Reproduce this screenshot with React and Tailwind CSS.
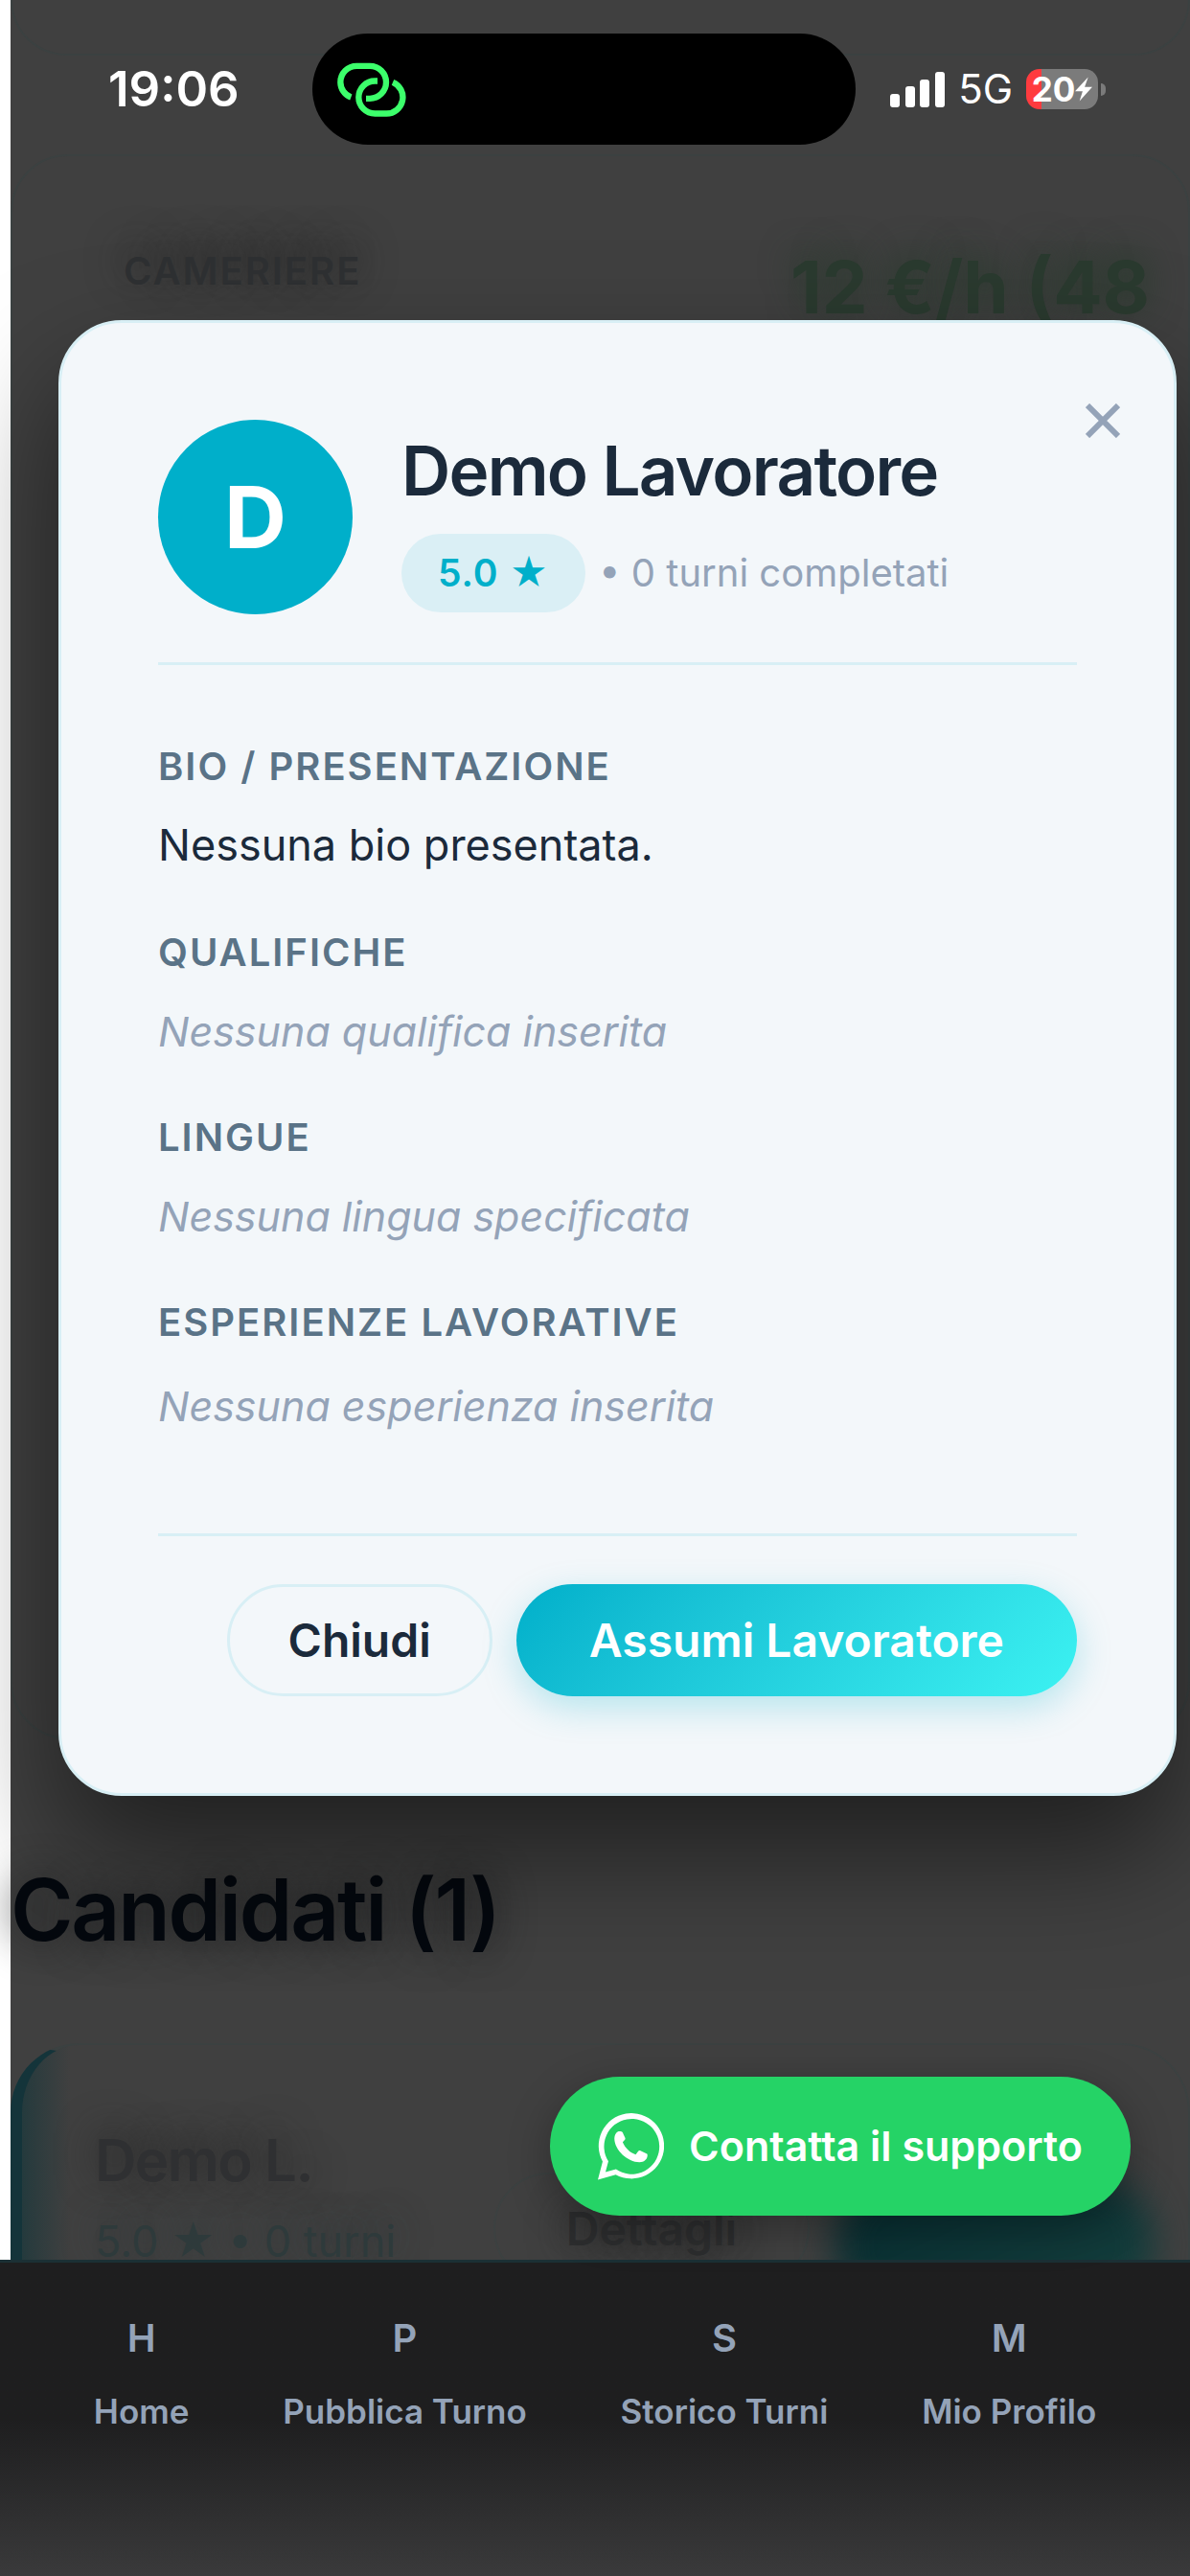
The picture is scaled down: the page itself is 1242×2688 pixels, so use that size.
import React, { useState } from "react";

const SECTIONS = [
  { title: "Bio / Presentazione", text: "Nessuna bio presentata.", filled: true },
  { title: "Qualifiche", text: "Nessuna qualifica inserita" },
  { title: "Lingue", text: "Nessuna lingua specificata" },
  { title: "Esperienze lavorative", text: "Nessuna esperienza inserita", spaced: true },
];

const NAV_ITEMS = [
  { letter: "H", label: "Home" },
  { letter: "P", label: "Pubblica Turno" },
  { letter: "S", label: "Storico Turni" },
  { letter: "M", label: "Mio Profilo" },
];

function LinkIcon() {
  return (
    <svg viewBox="66 44 216 170" className="w-[72px] h-[57px]" fill="none" stroke="#3cff6b" strokeWidth="19">
      <path d="M109 153A51 51 0 0 1 76 106A51 51 0 0 1 127 55H168A51 51 0 0 1 168 157H156" />
      <path d="M192 102H184A51 51 0 0 0 184 204H220A51 51 0 0 0 240 106" />
    </svg>
  );
}

function SignalIcon() {
  return (
    <svg viewBox="0 0 57 37" className="w-[57px] h-[37px]" fill="#fff">
      <rect x="0" y="23" width="10" height="14" rx="3" />
      <rect x="16" y="15" width="10" height="22" rx="3" />
      <rect x="31" y="8" width="10" height="29" rx="3" />
      <rect x="47" y="0" width="10" height="37" rx="3" />
    </svg>
  );
}

function Battery() {
  return (
    <div className="flex items-center gap-[3px]">
      <div className="flex h-[42px] w-[75px] items-center justify-center rounded-[14px] bg-linear-to-r from-[#ff3b3f] from-[16px] to-[#7b7b7b] to-[16px]">
        <span className="text-[35px] leading-[42px] font-bold">20</span>
        <svg viewBox="0 0 50 72" className="w-[18px] h-[26px]" fill="#fff">
          <path d="M38 1L0 42H22L13 71L50 30H28Z" />
        </svg>
      </div>
      <div className="h-[13px] w-[5px] rounded-r-full bg-[#7b7b7b]" />
    </div>
  );
}

function WhatsAppIcon() {
  return (
    <svg viewBox="42 60 208 210" className="w-[69px] h-[70px]" fill="#fff">
      <path
        fillRule="evenodd"
        d="M42 269L57 212A103 103 0 1 1 98 253ZM66 245L99 236A87 87 0 1 0 75 211Z"
      />
      <path d="M94 140C95 125 102 117 110 117C118 116 120 119 122 125L128 138C129 142 127 144 120 151C128 170 143 184 161 190L169 179C171 177 173 177 176 178L195 187C198 188 198 190 198 193C197 206 187 214 173 214C135 213 95 176 94 140Z" />
    </svg>
  );
}

function StatusBar() {
  return (
    <div className="absolute inset-x-0 top-0 flex h-[186px] items-center pr-[88px] pl-[113px] text-white">
      <span className="w-[213px] text-[51px] leading-[60px] font-semibold">19:06</span>
      <div className="flex h-[116px] w-[567px] items-center rounded-full bg-black pl-[26px]">
        <LinkIcon />
      </div>
      <div className="ml-auto flex items-center gap-[14px]">
        <SignalIcon />
        <span className="text-[42px] leading-[50px]">5G</span>
        <Battery />
      </div>
    </div>
  );
}

// Page content dimmed under the modal backdrop
function ShiftPage() {
  return (
    <div className="flex min-h-0 flex-1 overflow-hidden">
      <div className="w-[11px] shrink-0 bg-white" />
      <div className="flex min-w-0 flex-1 flex-col bg-[#404040]">
        <div className="h-[58px] shrink-0 rounded-b-[60px] border-x-2 border-b-2 border-[#3b4141]" />
        <section className="mt-[103px] flex h-[1654px] shrink-0 items-start justify-between rounded-[60px] border-2 border-[#3b4141] pt-[90px] pr-[40px] pl-[116px] whitespace-nowrap">
          <h3 className="mt-[6px] text-[40px] leading-[48px] font-semibold tracking-wider text-[#2e3032] uppercase [text-shadow:0_-10px_40px_#222]">
            Cameriere
          </h3>
          <span className="text-[76px] leading-[92px] font-bold text-[#2a3a2f] [text-shadow:0_-6px_36px_#263a2b]">
            12 €/h (48
          </span>
        </section>
        <h2 className="mt-[123px] text-[89px] leading-[110px] font-semibold tracking-tight text-[#04080e] [text-shadow:0_0_40px_#1c1d1e]">
          Candidati (1)
        </h2>
        <section className="mt-[84px] flex h-[400px] shrink-0 items-start justify-between rounded-[72px] border-2 border-l-[12px] border-[#3b4141] border-l-[#14343a] bg-linear-to-r from-[#243a3d] to-[#404040] to-[50px] pt-[84px] pr-[35px] pl-[76px]">
          <div className="flex flex-col gap-[29px]">
            <h3 className="text-[60px] leading-[72px] font-semibold tracking-tight text-[#2f3032] [text-shadow:0_-6px_40px_#242424]">
              Demo L.
            </h3>
            <p className="text-[45px] leading-[40px] text-[#2e3a3b] [text-shadow:0_-6px_36px_#303b3d]">5.0 ★ • 0 turni</p>
          </div>
          <div className="mt-[49px] flex gap-[26px]">
            <button className="h-[117px] w-[330px] rounded-full border-2 border-[#3c4141] text-[48px] font-semibold text-[#2c2d2e] [text-shadow:0_0_40px_#222]">
              Dettagli
            </button>
            <div className="h-[150px] w-[334px] rounded-full bg-linear-to-br from-[#05292e] to-[#17423f] blur-[18px]" />
          </div>
        </section>
      </div>
    </div>
  );
}

function BottomNav() {
  return (
    <nav className="flex h-[330px] shrink-0 items-start justify-evenly border-t-[3px] border-[#1b3035] bg-linear-to-b from-[#1e1e1f] from-50% to-[#3a3a3b] pt-[55px] font-semibold text-[#94a3b8]">
      {NAV_ITEMS.map((item) => (
        <a key={item.label} href="#" className="flex flex-col items-center gap-[30px]">
          <span className="text-[40px] leading-[48px]">{item.letter}</span>
          <span className="text-[35px] leading-[44px]">{item.label}</span>
        </a>
      ))}
    </nav>
  );
}

function WorkerModal({ onClose }) {
  return (
    <div className="absolute inset-x-0 top-0 pt-[334px] pr-[14px] pl-[61px]">
      <div
        role="dialog"
        aria-label="Demo Lavoratore"
        className="relative rounded-[66px] border-[3px] border-[#d8eff5] bg-[#f3f7fa] px-[101px] py-[101px] text-[#1b2a3b] shadow-[0_60px_120px_rgba(0,0,0,0.5)]"
      >
        <button aria-label="Chiudi finestra" onClick={onClose} className="absolute top-[84px] right-[56px]">
          <svg viewBox="0 0 36 36" className="size-[36px]" stroke="#94a3b8" strokeWidth="6">
            <path d="M2 2L34 34M34 2L2 34" />
          </svg>
        </button>

        <header className="flex items-center gap-[51px] border-b-[3px] border-[#d8eff5] pb-[50px]">
          <div className="flex size-[203px] shrink-0 items-center justify-center rounded-full bg-[#00afca] text-[90px] font-bold text-white">
            D
          </div>
          <div>
            <h2 className="text-[71px] leading-[102px] font-semibold tracking-tight">Demo Lavoratore</h2>
            <div className="mt-[15px] flex items-center gap-[14px]">
              <span className="rounded-full bg-[#daeff5] px-[38px] text-[39px] leading-[82px] font-semibold tracking-wide text-[#00afca]">
                5.0 ★
              </span>
              <span className="text-[40px] leading-[50px] text-[#94a3b8]">• 0 turni completati</span>
            </div>
          </div>
        </header>

        <div className="flex flex-col gap-[54px] pt-[82px]">
          {SECTIONS.map((s) => (
            <section key={s.title}>
              <h3 className="text-[40px] leading-[48px] font-semibold tracking-wider text-[#5a7387] uppercase">
                {s.title}
              </h3>
              {s.filled ? (
                <p className="mt-[24px] text-[45px] leading-[68px]">{s.text}</p>
              ) : (
                <p
                  className={`text-[43px] leading-[66px] text-[#94a3b8] italic ${s.spaced ? "mt-[30px]" : "mt-[25px]"}`}
                >
                  {s.text}
                </p>
              )}
            </section>
          ))}
        </div>

        <footer className="mt-[100px] flex justify-end gap-[25px] border-t-[3px] border-[#d8eff5] pt-[50px] text-[48px] font-semibold">
          <button onClick={onClose} className="h-[117px] rounded-full border-[3px] border-[#d8eff5] px-[61px]">
            Chiudi
          </button>
          <button className="h-[117px] rounded-full bg-linear-135 from-[#00afca] to-[#3cf2f2] px-[76px] text-white shadow-[0_12px_36px_rgba(0,175,202,0.25)]">
            Assumi Lavoratore
          </button>
        </footer>
      </div>
    </div>
  );
}

export default function App() {
  const [open, setOpen] = useState(true);

  return (
    <div className="relative flex h-screen flex-col overflow-hidden bg-[#404040] font-['Inter',sans-serif]">
      <ShiftPage />
      {open && <WorkerModal onClose={() => setOpen(false)} />}
      <a
        href="#"
        className="absolute right-[62px] bottom-[376px] flex h-[145px] items-center gap-[26px] rounded-full bg-[#25d366] px-[50px] text-[43px] font-semibold text-white shadow-[0_12px_45px_rgba(0,0,0,0.3)]"
      >
        <WhatsAppIcon />
        Contatta il supporto
      </a>
      <BottomNav />
      <StatusBar />
    </div>
  );
}
